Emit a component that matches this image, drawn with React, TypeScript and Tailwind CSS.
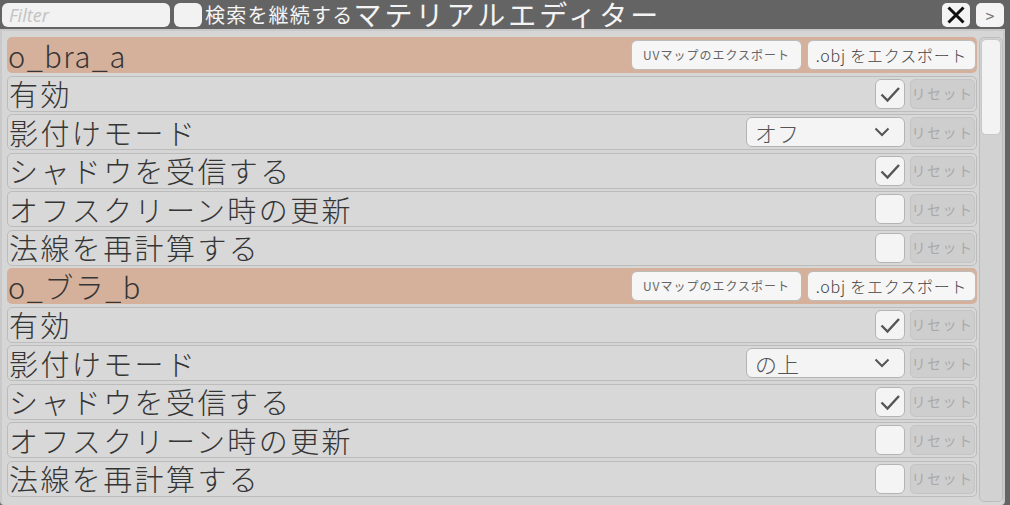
const jp = { fontFamily: '"Noto Sans CJK JP", "Noto Sans", sans-serif' }

const CheckBox = ({ checked }: { checked: boolean }) => (
  <div className="flex h-[30px] w-[30px] shrink-0 items-center justify-center rounded-[6px] border border-[#b4b4b4] bg-[#f4f4f4]">
    {checked && (
      <svg width="24" height="24" viewBox="0 0 24 24">
        <path d="M3.5 12.5 L9.5 18.5 L21 6" fill="none" stroke="#555" strokeWidth="2.4" />
      </svg>
    )}
  </div>
)

const ResetButton = () => (
  <div className="flex h-[30px] w-[65px] shrink-0 items-center justify-center rounded-[5px] border border-[#c4c4c4] bg-[#cecece] text-[14px] tracking-[1.5px] text-[#a9a9a9]">
    リセット
  </div>
)

const Dropdown = ({ value }: { value: string }) => (
  <div className="flex h-[30px] w-[159px] shrink-0 items-center justify-between rounded-[6px] border border-[#b4b4b4] bg-[#f4f4f4] pl-[8px] pr-[14px]">
    <span className="text-[22px] font-light leading-none text-[#555]">{value}</span>
    <svg width="16" height="10" viewBox="0 0 16 10">
      <path d="M1.5 1.5 L8 8 L14.5 1.5" fill="none" stroke="#555" strokeWidth="2" />
    </svg>
  </div>
)

const Row = ({ label, children }: { label: string; children?: React.ReactNode }) => (
  <div className="flex h-[36px] shrink-0 items-center rounded-[5px] border border-[#bcbcbc] bg-[#d8d8d8] pl-[1px] pr-[1px]">
    <span className="flex-1 whitespace-nowrap text-[29px] font-light leading-none tracking-[2.4px] text-[#353535]">{label}</span>
    <div className="flex items-center gap-[5px]">{children}</div>
  </div>
)

const SectionHeader = ({ name }: { name: string }) => (
  <div className="flex h-[36px] shrink-0 items-center rounded-[5px] bg-[#d5b19c] pl-[1px] pr-[1px]">
    <span className="flex-1 whitespace-nowrap text-[29px] font-light leading-none tracking-[1.5px] text-[#353535]">{name}</span>
    <div className="flex items-center gap-[5px]">
      <div className="flex h-[30px] w-[171px] items-center justify-center rounded-[6px] border border-[#bcbcbc] bg-[#f6f6f6] text-[12px] tracking-[1px] text-[#666]">
        UVマップのエクスポート
      </div>
      <div className="flex h-[30px] w-[169px] items-center justify-center rounded-[6px] border border-[#bcbcbc] bg-[#f6f6f6] text-[16px] font-light tracking-[0.8px] text-[#444]">
        .obj をエクスポート
      </div>
    </div>
  </div>
)

const sections = [
  { name: 'o_bra_a', mode: 'オフ' },
  { name: 'o_ブラ_b', mode: 'の上' },
]

export default function App() {
  return (
    <div className="flex h-[505px] w-[1010px] flex-col overflow-hidden bg-[#646464]" style={jp}>
      <div className="flex h-[29px] shrink-0 items-center pl-[2px] pr-[6px]">
        <div className="flex h-[24px] w-[168px] items-center rounded-[6px] bg-[#f2f2f2] pl-[7px]">
          <span className="text-[18px] italic leading-none text-[#c4c4c4]" style={{ fontFamily: '"Noto Sans", sans-serif' }}>
            Filter
          </span>
        </div>
        <div className="ml-[4px] h-[24px] w-[28px] rounded-[6px] bg-[#f2f2f2]" />
        <span className="ml-[3px] whitespace-nowrap text-[20px] leading-[28px] tracking-[1.2px] text-[#f4f4f4]">検索を継続する</span>
        <span className="whitespace-nowrap text-[28px] leading-[29px] tracking-[3px] text-[#f4f4f4]">マテリアルエディター</span>
        <div className="flex-1" />
        <div className="flex h-[24px] w-[28px] items-center justify-center rounded-[5px] bg-[#f4f4f4]">
          <svg width="20" height="20" viewBox="0 0 20 20">
            <path d="M2.5 2.5 L17.5 17.5 M17.5 2.5 L2.5 17.5" stroke="#111" strokeWidth="3" />
          </svg>
        </div>
        <div className="ml-[6px] flex h-[24px] w-[28px] items-center justify-center rounded-[5px] bg-[#f4f4f4] text-[16px] text-[#777]">
          &gt;
        </div>
      </div>
      <div className="mr-[5px] flex min-h-0 flex-1 rounded-b-[4px] border-l-2 border-r-[2px] border-t-2 border-[#c9c9c9] bg-[#d6d6d6] pl-[5px] pt-[6px]">
        <div className="flex flex-1 flex-col gap-[2.5px]">
          {sections.map((s) => (
            <div key={s.name} className="flex flex-col gap-[2.5px]">
              <SectionHeader name={s.name} />
              <Row label="有効">
                <CheckBox checked />
                <ResetButton />
              </Row>
              <Row label="影付けモード">
                <Dropdown value={s.mode} />
                <ResetButton />
              </Row>
              <Row label="シャドウを受信する">
                <CheckBox checked />
                <ResetButton />
              </Row>
              <Row label="オフスクリーン時の更新">
                <CheckBox checked={false} />
                <ResetButton />
              </Row>
              <Row label="法線を再計算する">
                <CheckBox checked={false} />
                <ResetButton />
              </Row>
            </div>
          ))}
        </div>
        <div className="mb-[3px] ml-[2px] w-[24px] shrink-0 rounded-[5px] border border-[#bdbdbd] bg-[#d2d2d2] p-[1px]">
          <div className="h-[96px] w-[20px] rounded-[5px] border border-[#c8c8c8] bg-[#f3f3f3]" />
        </div>
      </div>
    </div>
  )
}
